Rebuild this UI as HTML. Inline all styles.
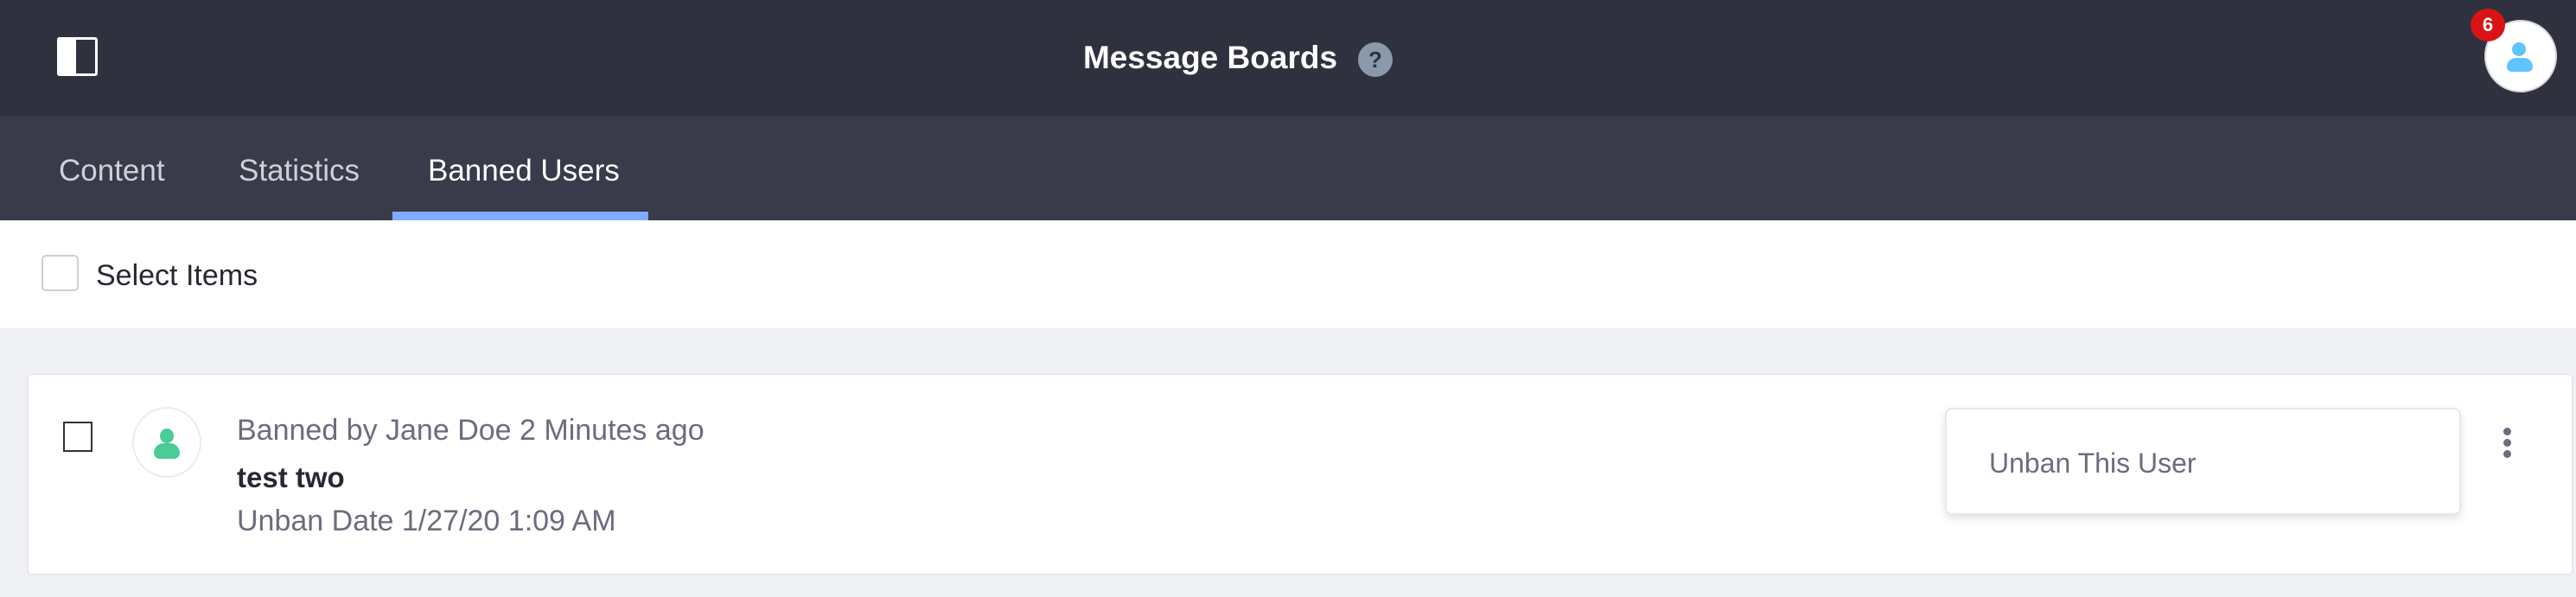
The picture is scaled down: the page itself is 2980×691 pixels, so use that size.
<!DOCTYPE html>
<html><head><meta charset="utf-8"><style>
*{margin:0;padding:0;box-sizing:border-box}
body{width:2980px;height:691px;overflow:hidden;background:#f0f1f5;font-family:"Liberation Sans",sans-serif;position:relative}
.abs{position:absolute}
</style></head><body>
<div class="abs" style="left:0;top:0;width:2980px;height:134px;background:#30313f"></div>
<div class="abs" style="left:66px;top:43px;width:47px;height:45px;border:3px solid #fff;border-radius:3px"></div>
<div class="abs" style="left:66px;top:43px;width:22px;height:45px;background:#fff;border-radius:3px 0 0 3px"></div>
<div class="abs" style="left:1250px;top:44px;width:300px;text-align:center;color:#fff;font-weight:bold;font-size:37px;line-height:46px;white-space:nowrap">Message Boards</div>
<div class="abs" style="left:1571px;top:49px;width:40px;height:40px;border-radius:50%;background:#8a9aab;color:#30313f;font-weight:bold;font-size:26px;line-height:40px;text-align:center">?</div>
<div class="abs" style="left:2874px;top:23px;width:84px;height:84px;border-radius:50%;background:#fff;border:2px solid #d8d8de"></div>
<div class="abs" style="left:2906px;top:49px;width:16px;height:16px;border-radius:50%;background:#5fc4ff"></div>
<div class="abs" style="left:2900px;top:67px;width:30px;height:16px;border-radius:15px 15px 8px 8px;background:#5fc4ff"></div>
<div class="abs" style="left:2858px;top:10px;width:40px;height:38px;border-radius:50%;background:#da1414;color:#fff;font-weight:bold;font-size:22px;line-height:38px;text-align:center">6</div>
<div class="abs" style="left:0;top:134px;width:2980px;height:121px;background:#393a4a"></div>
<div class="abs" style="left:68px;top:176px;color:#cfd0d8;font-size:35px;line-height:44px">Content</div>
<div class="abs" style="left:276px;top:176px;color:#cfd0d8;font-size:35px;line-height:44px">Statistics</div>
<div class="abs" style="left:495px;top:176px;color:#fff;font-size:35px;line-height:44px">Banned Users</div>
<div class="abs" style="left:454px;top:245px;width:296px;height:10px;background:#80acff"></div>
<div class="abs" style="left:0;top:255px;width:2980px;height:125px;background:#fff"></div>
<div class="abs" style="left:48px;top:295px;width:43px;height:42px;border:2px solid #cdced9;border-radius:5px"></div>
<div class="abs" style="left:111px;top:297px;color:#272833;font-size:34px;line-height:44px;font-weight:500">Select Items</div>
<div class="abs" style="left:31px;top:432px;width:2946px;height:234px;background:#fff;border:2px solid #e7e7ed;border-radius:6px"></div>
<div class="abs" style="left:73px;top:488px;width:34px;height:35px;border:2px solid #333"></div>
<div class="abs" style="left:153px;top:471px;width:80px;height:82px;border-radius:50%;border:2px solid #ececf0;background:#fff"></div>
<div class="abs" style="left:185px;top:496px;width:16px;height:17px;border-radius:50%;background:#4bcb95"></div>
<div class="abs" style="left:178px;top:513px;width:30px;height:18px;border-radius:15px 15px 9px 9px;background:#4bcb95"></div>
<div class="abs" style="left:274px;top:477px;color:#6b6c7e;font-size:34px;line-height:42px;white-space:nowrap">Banned by Jane Doe 2 Minutes ago</div>
<div class="abs" style="left:274px;top:532px;color:#272833;font-size:33px;line-height:42px;font-weight:bold">test two</div>
<div class="abs" style="left:274px;top:582px;color:#6b6c7e;font-size:34px;line-height:42px;white-space:nowrap">Unban Date 1/27/20 1:09 AM</div>
<div class="abs" style="left:2250px;top:472px;width:597px;height:124px;background:#fff;border:2px solid #e7e7ed;border-radius:8px;box-shadow:0 4px 10px rgba(0,0,0,.12)"></div>
<div class="abs" style="left:2301px;top:515px;color:#6b6c7e;font-size:32px;line-height:42px">Unban This User</div>
<div class="abs" style="left:2896px;top:495px;width:9px;height:9px;border-radius:50%;background:#6b6c7e"></div>
<div class="abs" style="left:2896px;top:508px;width:9px;height:9px;border-radius:50%;background:#6b6c7e"></div>
<div class="abs" style="left:2896px;top:521px;width:9px;height:9px;border-radius:50%;background:#6b6c7e"></div>
</body></html>
